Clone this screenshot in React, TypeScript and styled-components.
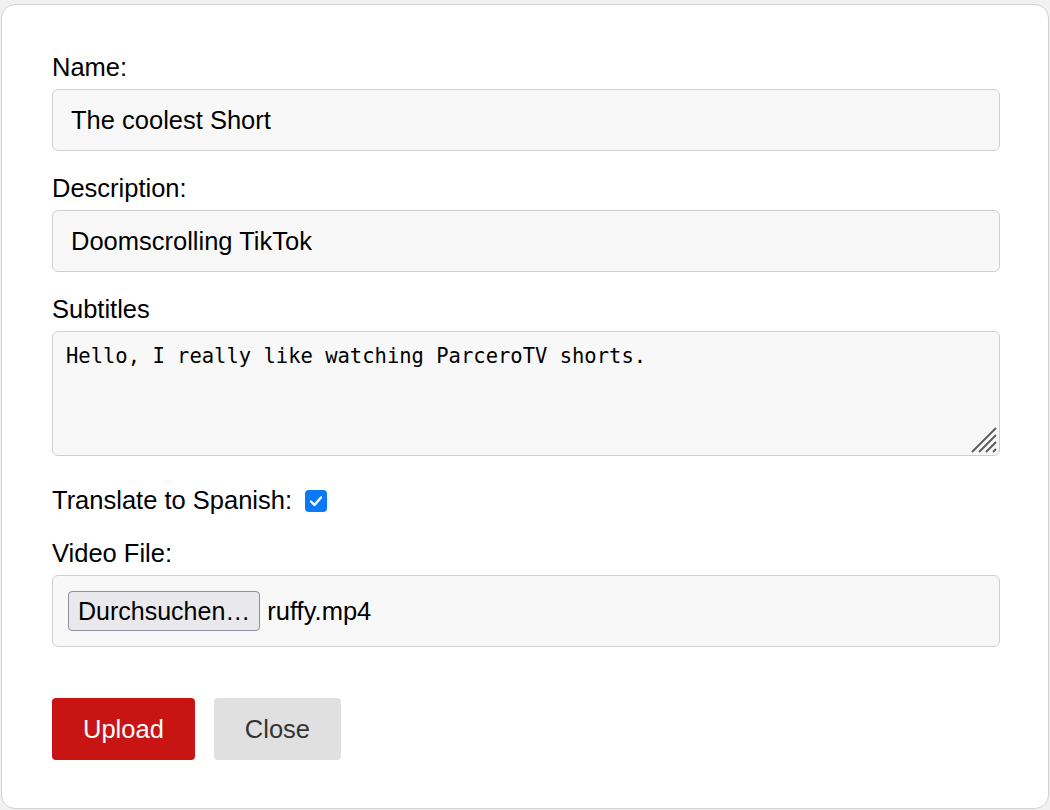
import React from 'react';
import styled, { createGlobalStyle } from 'styled-components';

const GlobalStyle = createGlobalStyle`
	html, body {
		margin: 0;
		padding: 0;
		background: #f1f1f1;
	}
	body {
		font-family: 'Liberation Sans', Arial, sans-serif;
		color: #000;
	}
`;

export default function App() {
	return (
		<>
			<GlobalStyle />
			<Modal>
				<Field>
					<Label>Name:</Label>
					<TextInput defaultValue='The coolest Short' />
				</Field>
				<Field>
					<Label>Description:</Label>
					<TextInput defaultValue='Doomscrolling TikTok' />
				</Field>
				<Field>
					<Label>Subtitles</Label>
					<AreaWrap>
						<TextArea defaultValue='Hello, I really like watching ParceroTV shorts.' />
						<Grip width='28' height='28' viewBox='0 0 28 28'>
							<path d='M2 26 L26 2 M9 26 L26 9 M16 26 L26 16 M23 26 L26 23' stroke='#5e5e5e' strokeWidth='2' />
						</Grip>
					</AreaWrap>
				</Field>
				<CheckRow>
					<Label as='span'>Translate to Spanish:</Label>
					<CheckBox>
						<svg width='16' height='16' viewBox='0 0 16 16'>
							<path d='M3 8.5 L6.5 12 L13 4.5' fill='none' stroke='#fff' strokeWidth='2.4' strokeLinecap='round' strokeLinejoin='round' />
						</svg>
					</CheckBox>
				</CheckRow>
				<Field>
					<Label>Video File:</Label>
					<FileBox>
						<BrowseButton>Durchsuchen…</BrowseButton>
						<FileName>ruffy.mp4</FileName>
					</FileBox>
				</Field>
				<Actions>
					<ActionButton $primary>Upload</ActionButton>
					<ActionButton>Close</ActionButton>
				</Actions>
			</Modal>
		</>
	);
}

const Modal = styled.div`
	margin: 4px 1px 0 1px;
	height: 805px;
	box-sizing: border-box;
	background: #fff;
	border: 1px solid #d2d2d2;
	border-radius: 14px;
	padding: 48px 48px 0 50px;
	display: flex;
	flex-direction: column;
`;

const Field = styled.div`
	display: flex;
	flex-direction: column;
	gap: 7px;
	margin-bottom: 23px;
`;

const Label = styled.label`
	font-size: 25.5px;
	line-height: 29px;
	color: #000;
`;

const TextInput = styled.input`
	box-sizing: border-box;
	height: 62px;
	width: 100%;
	padding: 0 18px;
	font-family: 'Liberation Sans', Arial, sans-serif;
	font-size: 25.5px;
	color: #000;
	background: #f8f8f8;
	border: 1px solid #cfcfcf;
	border-radius: 6px;
	outline: none;
`;

const AreaWrap = styled.div`
	position: relative;
	display: flex;
`;

const TextArea = styled.textarea`
	box-sizing: border-box;
	width: 100%;
	height: 125px;
	padding: 12px 13px;
	font-family: 'DejaVu Sans Mono', 'Liberation Mono', monospace;
	font-size: 20.5px;
	color: #000;
	background: #f8f8f8;
	border: 1px solid #cfcfcf;
	border-radius: 6px;
	resize: none;
	outline: none;
`;

const Grip = styled.svg`
	position: absolute;
	right: 2px;
	bottom: 2px;
`;

const CheckRow = styled.div`
	display: flex;
	align-items: center;
	gap: 13px;
	margin: 7px 0 24px;
`;

const CheckBox = styled.span`
	width: 22px;
	height: 22px;
	box-sizing: border-box;
	border-radius: 4px;
	background: #0b78f5;
	display: flex;
	align-items: center;
	justify-content: center;
`;

const FileBox = styled.div`
	box-sizing: border-box;
	height: 72px;
	display: flex;
	align-items: center;
	gap: 7px;
	padding: 0 15px;
	background: #f8f8f8;
	border: 1px solid #cfcfcf;
	border-radius: 6px;
`;

const BrowseButton = styled.button`
	height: 40px;
	padding: 0 9px;
	font-family: 'Liberation Sans', Arial, sans-serif;
	font-size: 25px;
	color: #000;
	background: #e9e9ed;
	border: 1px solid #8f8f9d;
	border-radius: 4px;
`;

const FileName = styled.span`
	font-size: 25.5px;
	color: #000;
`;

const Actions = styled.div`
	display: flex;
	gap: 19px;
	margin-top: 28px;
`;

const ActionButton = styled.button<{ $primary?: boolean }>`
	height: 62px;
	padding: 0 31px;
	font-family: 'Liberation Sans', Arial, sans-serif;
	font-size: 25.5px;
	border: none;
	border-radius: 4px;
	background: ${({ $primary }) => ($primary ? '#c91414' : '#e0e0e0')};
	color: ${({ $primary }) => ($primary ? '#fff' : '#333')};
`;
